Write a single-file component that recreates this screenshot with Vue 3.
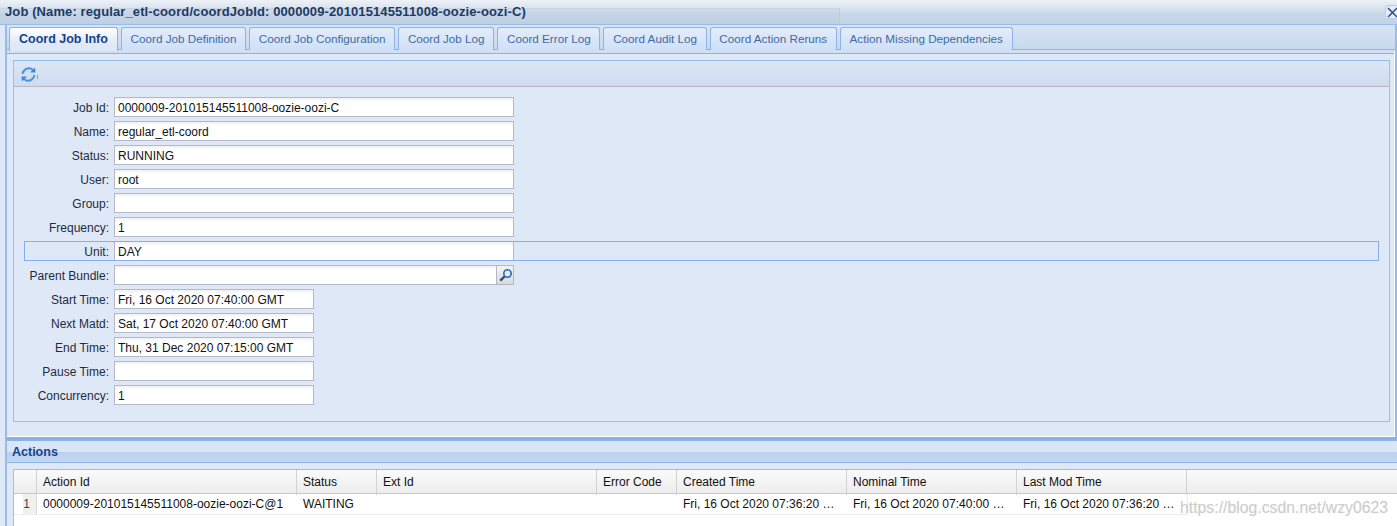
<script setup>
const tabs = ['Coord Job Info','Coord Job Definition','Coord Job Configuration','Coord Job Log','Coord Error Log','Coord Audit Log','Coord Action Reruns','Action Missing Dependencies']
const fields = [
  { label:'Job Id', value:'0000009-201015145511008-oozie-oozi-C' },
  { label:'Name', value:'regular_etl-coord' },
  { label:'Status', value:'RUNNING' },
  { label:'User', value:'root' },
  { label:'Group', value:'' },
  { label:'Frequency', value:'1' },
  { label:'Unit', value:'DAY', focus:true },
  { label:'Parent Bundle', value:'', trigger:true },
  { label:'Start Time', value:'Fri, 16 Oct 2020 07:40:00 GMT', short:true },
  { label:'Next Matd', value:'Sat, 17 Oct 2020 07:40:00 GMT', short:true },
  { label:'End Time', value:'Thu, 31 Dec 2020 07:15:00 GMT', short:true },
  { label:'Pause Time', value:'', short:true },
  { label:'Concurrency', value:'1', short:true },
]
const cols = ['Action Id','Status','Ext Id','Error Code','Created Time','Nominal Time','Last Mod Time']
const cells = ['0000009-201015145511008-oozie-oozi-C@1','WAITING','','','Fri, 16 Oct 2020 07:36:20 GMT','Fri, 16 Oct 2020 07:40:00 GMT','Fri, 16 Oct 2020 07:36:20 GMT']
</script>

<template>
  <div class="win">
    <header class="title">
      <span class="ghost"></span>
      <span class="title-text">Job (Name: regular_etl-coord/coordJobId: 0000009-201015145511008-oozie-oozi-C)</span>
      <span class="close">
        <svg width="11" height="11" viewBox="0 0 11 11"><path d="M1 1 10 10M10 1 1 10" stroke="#2b4a94" stroke-width="1.500" fill="none"/></svg>
      </span>
    </header>
    <section class="upper">
      <nav class="tabs">
        <div v-for="(t,i) in tabs" :key="t" class="tab" :class="{ active: i===0 }">{{ t }}</div>
      </nav>
      <div class="tabbody">
        <div class="panel">
          <div class="toolbar">
            <svg class="refresh" width="17" height="15" viewBox="0 0 17 15">
              <path d="M1.500 7C2 3 6 0.500 9.500 1.500L12 3" fill="none" stroke="#4a93e4" stroke-width="2"/>
              <path d="M3.500 7C4 4.500 6.500 3 9 3.800" fill="none" stroke="#bcd8f5" stroke-width="1"/>
              <path d="M9 5.500 14.500 5.500 14 0.500Z" fill="#3f86da"/>
              <path d="M13.500 8C13 12 9 14.500 5.500 13.500L3 12" fill="none" stroke="#4a93e4" stroke-width="2"/>
              <path d="M11.500 8C11 10.500 8.500 12 6 11.200" fill="none" stroke="#bcd8f5" stroke-width="1"/>
              <path d="M6 9.500 0.500 9.500 1 14.500Z" fill="#3f86da"/>
              <path d="M16.500 8V12" stroke="#6f9fd8" stroke-width="1"/>
            </svg>
          </div>
          <div class="form">
            <div v-for="f in fields" :key="f.label" class="row" :class="{ focus: f.focus }">
              <label class="lbl">{{ f.label }}:</label>
              <div class="ctl" :class="{ short: f.short }">
                <div class="input">{{ f.value }}</div>
                <div v-if="f.trigger" class="trigger">
                  <svg width="15" height="15" viewBox="0 0 15 15"><circle cx="9.500" cy="5.500" r="3.700" fill="#dcebf8" stroke="#2f6aa8" stroke-width="1.600"/><path d="M6.500 8.500 2.300 12.700" stroke="#1f4f8a" stroke-width="2.400"/></svg>
                </div>
              </div>
            </div>
          </div>
        </div>
      </div>
    </section>
    <section class="lower">
      <div class="lower-head">Actions</div>
      <div class="lower-body">
        <div class="grid">
          <div class="grow ghead">
            <div class="rn"></div>
            <div v-for="c in cols" :key="c" class="hc">{{ c }}</div>
            <div class="fill"></div>
          </div>
          <div class="grow gdata">
            <div class="rn num">1</div>
            <div v-for="(c,i) in cells" :key="i" class="dc">{{ c }}</div>
          </div>
        </div>
      </div>
    </section>
    <div class="mark">https://blog.csdn.net/wzy0623</div>
  </div>
</template>

<style scoped>
.win { width:1397px; height:526px; overflow:hidden; position:relative; display:flex; flex-direction:column; font:12px/14px "Liberation Sans", Arial, sans-serif; color:#15263d; background:#dfe8f6; }
.title { flex:none; height:25px; box-sizing:border-box; padding:5px 0 0 5px; position:relative; background:linear-gradient(#eef2f8,#c8d7e8 60%,#c3d3e6); border-bottom:1px solid #99bbe8; }
.title-text { position:relative; font-weight:bold; font-size:13px; letter-spacing:.11px; color:#1d3a63; }
.ghost { position:absolute; left:0; top:8px; width:840px; height:16px; border-right:1px solid #bdcbdf; border-top:1px solid #c6d3e3; box-sizing:border-box; background:rgba(170,190,215,.12); }
.close { position:absolute; left:1385px; top:5px; width:14px; height:14px; background:#e3edf9; border:1px solid #b7cdea; border-radius:3px; display:flex; align-items:center; padding-left:1px; box-sizing:border-box; }
.upper { flex:none; height:412px; margin-left:5px; border-left:2px solid #99bbe8; border-right:2px solid #99bbe8; box-sizing:border-box; background:#dfe8f6; display:flex; flex-direction:column; }
.tabs { flex:none; height:25px; display:flex; gap:3px; padding:2px 0 0 2px; box-sizing:border-box; background:linear-gradient(#d7e4f5,#c9d9ec); border-bottom:1px solid #8db2e3; }
.tab { height:22px; line-height:21px; padding:0 8.7px; font-size:11.7px; border:1px solid #8db2e3; border-bottom:none; border-radius:3px 3px 0 0; background:linear-gradient(#e3ecfa,#cfe0f7); color:#416aa3; }
.tab.active { height:23px; line-height:23px; padding:0 9px; position:relative; font-weight:bold; color:#15428b; background:linear-gradient(#fff,#dfe8f6 70%); font-size:12.5px; }
.tabbody { flex:1; padding:7px 4px 14px 6px; border-top:3px solid #cfdff5; border-right:1px solid #fff; border-bottom:1px solid #fff; box-shadow:inset 0 1px 0 #8db2e3; min-height:0; display:flex; }
.panel { flex:1; border:1px solid #b5b8c8; border-top-color:#99bbe8; border-left-color:#a9bcd8; display:flex; flex-direction:column; background:#dfe8f6; }
.toolbar { flex:none; height:26px; box-sizing:border-box; padding:6px 0 0 7px; background:linear-gradient(#dce7f6,#cfdcee); border-bottom:1px solid #b5b8c8; }
.refresh { display:block; }
.form { padding:10px 10px 0 10px; display:flex; flex-direction:column; gap:4px; }
.row { display:flex; gap:5px; height:20px; box-sizing:border-box; }
.row.focus { outline:1px solid #84aef0; outline-offset:-1px; }
.lbl { width:85px; text-align:right; line-height:22px; flex:none; color:#1c2c40; }
.ctl { width:400px; display:flex; flex:none; }
.ctl.short { width:200px; }
.input { flex:1; box-sizing:border-box; height:20px; line-height:20px; padding:0 3px; border:1px solid #b5b8c8; background:linear-gradient(#f1f1f1,#fff 4px); color:#111; white-space:nowrap; overflow:hidden; }
.trigger { width:17px; height:20px; box-sizing:border-box; border:1px solid #b5b8c8; border-left:none; background:linear-gradient(#f4f4f4,#d9d9d9); display:flex; align-items:center; justify-content:center; }
.lower { flex:1; min-height:0; display:flex; flex-direction:column; margin-left:5px; border-left:2px solid #99bbe8; border-top:4px solid #8db2e3; }
.lower-head { flex:none; height:22px; line-height:23px; padding-left:5px; box-sizing:border-box; font-weight:bold; color:#15428b; font-size:12.5px; background:linear-gradient(#d8e6f6 50%,#b9d0ee 50%,#c3d8f2); border-bottom:1px solid #8db2e3; }
.lower-body { flex:1; padding:6px 0 0 6px; background:#dfe8f6; min-height:0; }
.grid { height:100%; box-sizing:border-box; background:#fff; border-top:1px solid #99bbe8; border-left:1px solid #a9bcd8; }
.grow { display:grid; grid-template-columns:23px 260px 80px 220px 80px 170px 170px 170px 1fr; }
.ghead { height:24px; box-sizing:border-box; background:linear-gradient(#fafafa,#ededed); border-bottom:1px solid #c8c8c8; }
.hc { padding:0 6px; line-height:25px; border-right:1px solid #d2d2d2; color:#111; }
.ghead .rn { border-right:1px solid #d2d2d2; }
.gdata { width:1174px; height:21px; box-sizing:border-box; border-bottom:1px solid #ededed; border-right:1px solid #ededed; grid-template-columns:23px 260px 80px 220px 80px 170px 170px 169px; }
.dc { padding:0 6px; line-height:20px; color:#111; white-space:nowrap; overflow:hidden; text-overflow:ellipsis; }
.num { background:linear-gradient(90deg,#fff 40%,#f0f0f0 40%); border-right:1px solid #d8d8d8; text-align:right; padding-right:6px; line-height:20px; color:#444; }
.mark { position:absolute; left:1180px; top:498px; font-size:15.8px; line-height:20px; color:rgba(190,190,190,.65); text-shadow:0 0 1px rgba(200,200,200,.5); }
</style>
